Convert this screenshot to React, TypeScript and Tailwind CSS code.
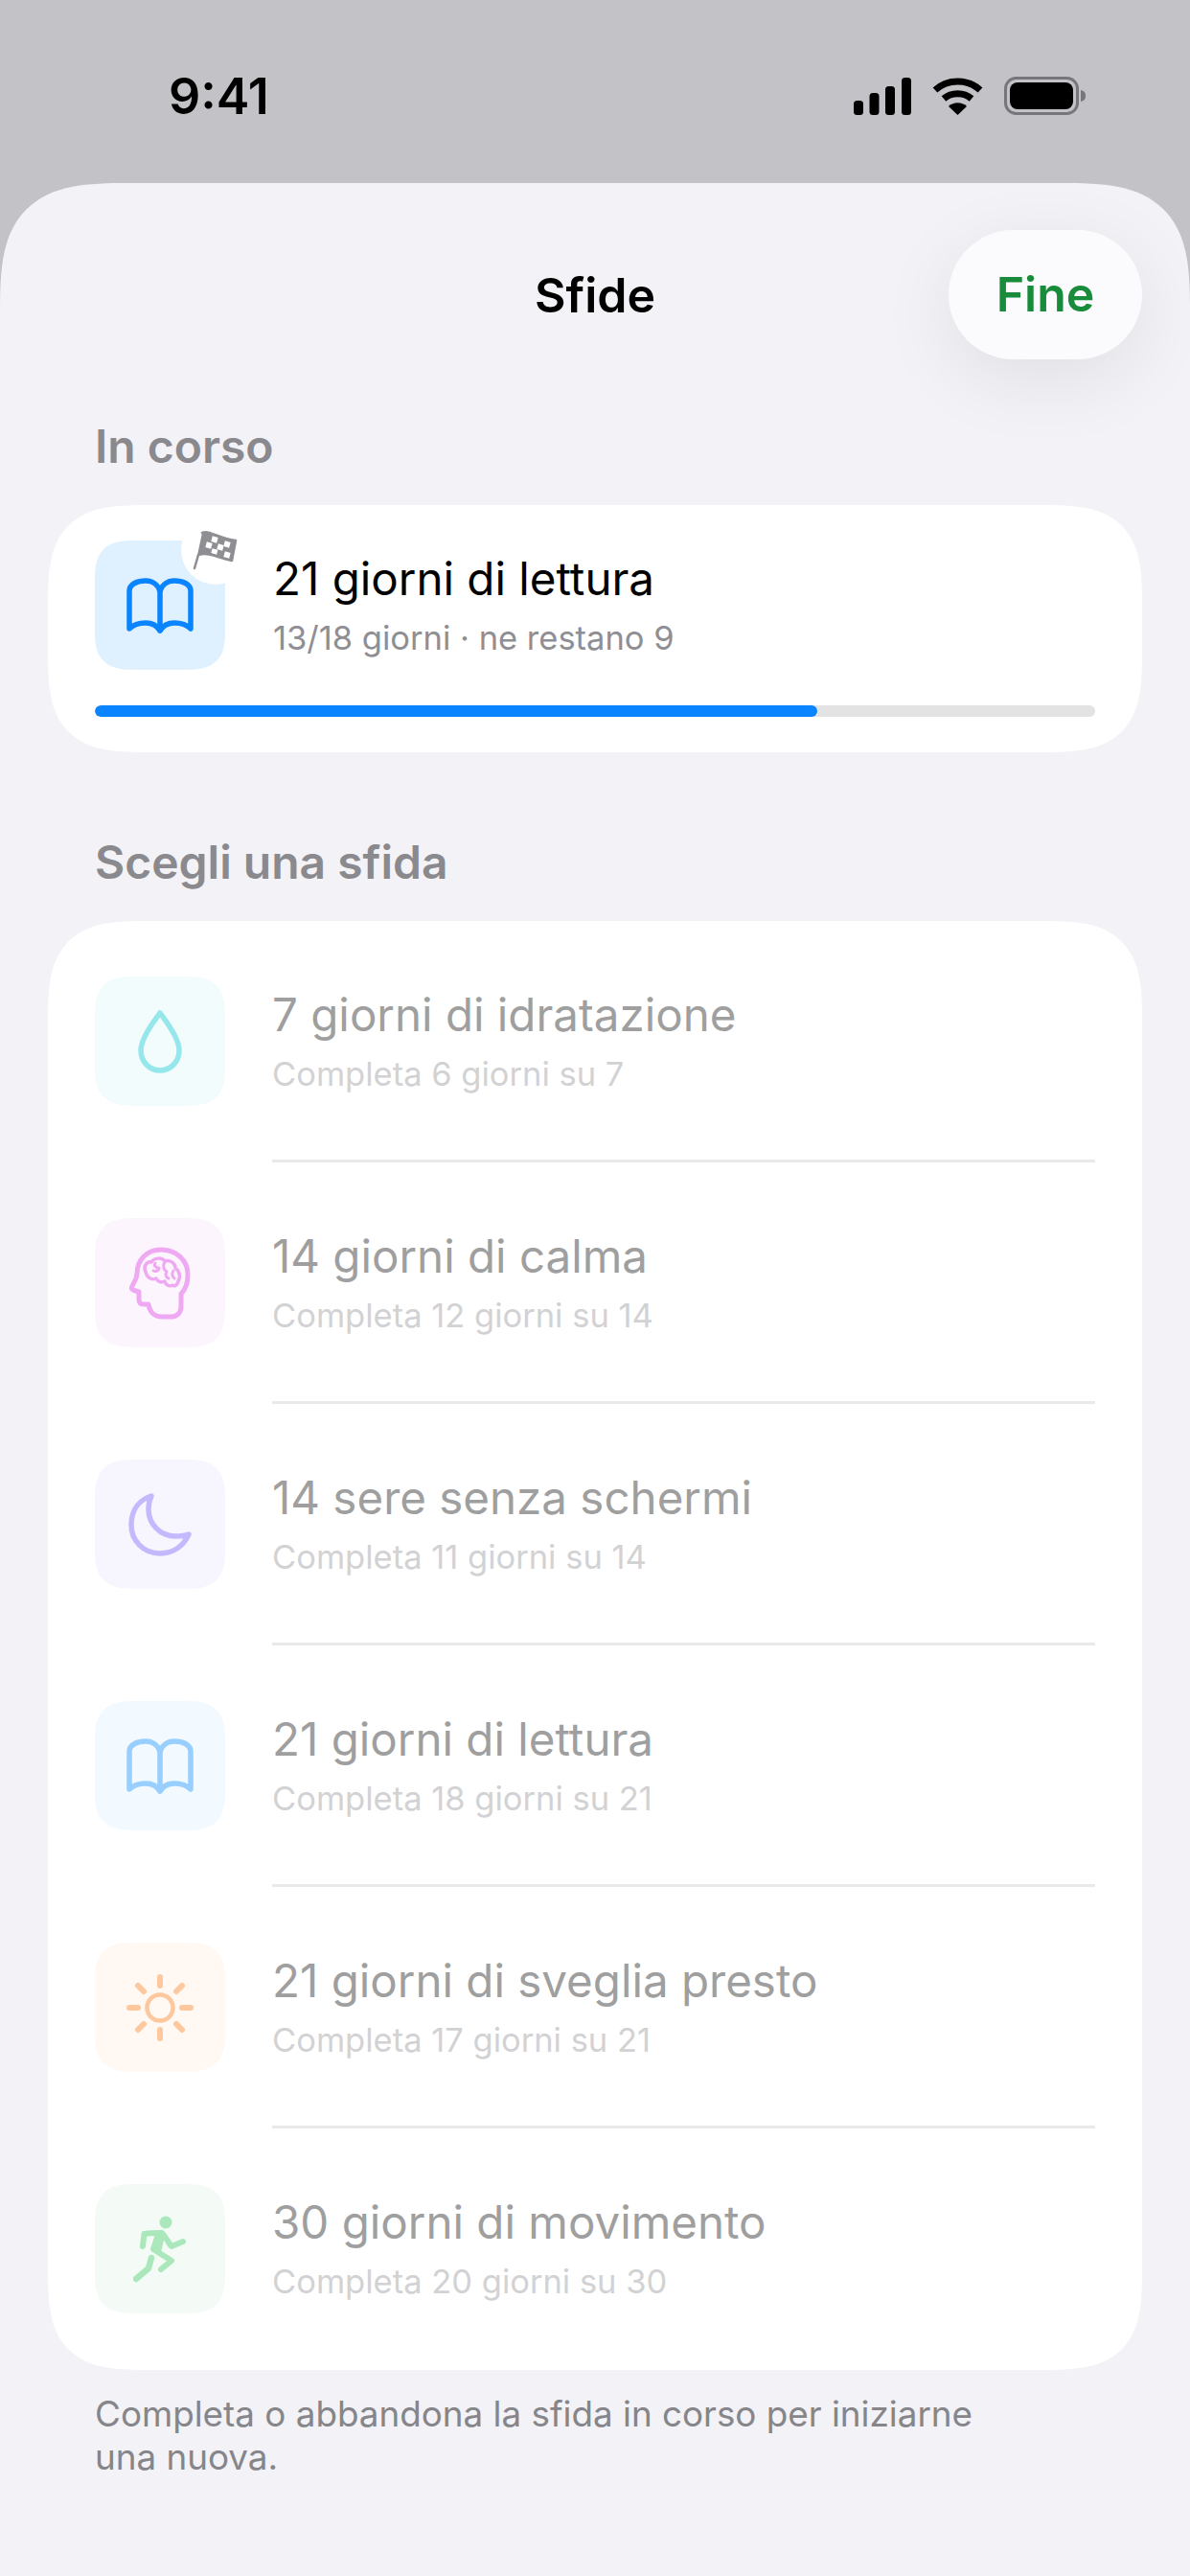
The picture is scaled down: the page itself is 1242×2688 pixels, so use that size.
const font = { fontFamily: '"Inter", "Liberation Sans", sans-serif' };

function Book({ color }: { color: string }) {
  return (
    <svg width="70" height="58" viewBox="0 0 70 58" fill="none" stroke={color} strokeWidth="5.5" strokeLinejoin="round" strokeLinecap="round">
      <path d="M35 14C33 7 27 3 20 3C12 3 3 6 3 14V53C8 48 14 47 20 47C27 47 32 50 35 55C38 50 43 47 50 47C56 47 62 48 67 53V14C67 6 58 3 50 3C43 3 37 7 35 14Z" />
      <path d="M35 14V55" />
    </svg>
  );
}
function Drop() {
  return (
    <svg width="46" height="66" viewBox="0 0 46 66" fill="none" stroke="#96e7ec" strokeWidth="5.5" strokeLinejoin="round">
      <path d="M23 3C27 9 43 28 43 42C43 54 34 63 23 63C12 63 3 54 3 42C3 28 19 9 23 3Z" />
    </svg>
  );
}
function Head() {
  return (
    <svg width="64" height="76" viewBox="0 0 64 76" fill="none" stroke="#efa9f2" strokeWidth="5" strokeLinecap="round" strokeLinejoin="round">
      <path d="M33 3C18 3 8 14 8 28L7 33L2.5 42C2 44 3 45 5 45.5L10 47V55C10 59 12 60 15 60H20C21 68 26 73 34 73H43C50 73 54 69 54 62V49C59 44 61 37 61 29C61 14 49 3 33 3Z" />
      <path d="M17 26C14 21 18 15 23 16C26 11 34 11 37 15C42 13 48 17 48 22C52 25 54 31 51 36C50 40 47 42 45 40C42 42 38 40 37 36C33 38 29 36 28 33C23 35 18 32 17 26Z" strokeWidth="3.5" />
      <path d="M27 17C25 20 28 22 31 22C31 25 27 26 25 25M37 16C34 20 36 24 39 26C37 29 38 32 41 33M46 25C44 28 45 31 47 33" strokeWidth="3" />
    </svg>
  );
}
function Moon() {
  return (
    <svg width="66" height="66" viewBox="0 0 66 66" fill="none" stroke="#c3b9fc" strokeWidth="5.5" strokeLinejoin="round">
      <path d="M24 3C15 6 3 14 3 33C3 50 16 63 33 63C48 63 58 54 63 43C58 45 54 45 49 45C33 45 21 32 21 17C21 11 22 7 24 3Z" />
    </svg>
  );
}
function Sun() {
  return (
    <svg width="70" height="70" viewBox="0 0 70 70" fill="none" stroke="#fdc89e" strokeWidth="6" strokeLinecap="round">
      <circle cx="35" cy="35" r="13.5" strokeWidth="4.5" />
      <path d="M35 3V12M35 58V67M3 35H12M58 35H67M12 12L18 18M58 12L52 18M12 58L18 52M58 58L52 52" />
    </svg>
  );
}
function Runner() {
  return (
    <svg width="56" height="70" viewBox="0 0 56 70" fill="none" stroke="#aae8bb" strokeLinecap="round" strokeLinejoin="round">
      <circle cx="34" cy="7" r="6.5" fill="#aae8bb" stroke="none" />
      <path d="M10 32L11.500 19C18 18 25 18 30 18C34 22 37 29 40 32L52 27" strokeWidth="6" />
      <path d="M26 20L21 35L40 47L29 56" strokeWidth="6" />
      <path d="M28 20L25 34" strokeWidth="10" />
      <path d="M19 44L16 55L3 66" strokeWidth="6.5" />
    </svg>
  );
}
function Flag() {
  return (
    <svg width="48" height="42" viewBox="0 0 48 42" className="block">
      <path d="M10 3C18 0 25 8 45 11L41 32C30 31 18 22 6 26L2 40" fill="#8e8e93" stroke="#8e8e93" strokeWidth="2.5" strokeLinecap="round" strokeLinejoin="round" />
      <g fill="#fff">
        <rect x="20" y="7" width="6" height="6" transform="rotate(15 23 10)" />
        <rect x="33" y="12" width="6" height="6" transform="rotate(15 36 15)" />
        <rect x="14" y="13" width="6" height="6" transform="rotate(15 17 16)" />
        <rect x="26" y="15" width="6" height="6" transform="rotate(15 29 18)" />
        <rect x="20" y="20" width="6" height="5" transform="rotate(15 23 22)" />
        <rect x="33" y="23" width="6" height="6" transform="rotate(15 36 26)" />
      </g>
    </svg>
  );
}

const rows = [
  { t: "7 giorni di idratazione", s: "Completa 6 giorni su 7", bg: "bg-[#f2fcfd]", icon: <Drop /> },
  { t: "14 giorni di calma", s: "Completa 12 giorni su 14", bg: "bg-[#fdf5fe]", icon: <Head /> },
  { t: "14 sere senza schermi", s: "Completa 11 giorni su 14", bg: "bg-[#f7f6ff]", icon: <Moon /> },
  { t: "21 giorni di lettura", s: "Completa 18 giorni su 21", bg: "bg-[#f2f9ff]", icon: <Book color="#99cfff" /> },
  { t: "21 giorni di sveglia presto", s: "Completa 17 giorni su 21", bg: "bg-[#fff8f3]", icon: <Sun /> },
  { t: "30 giorni di movimento", s: "Completa 20 giorni su 30", bg: "bg-[#f4fbf6]", icon: <Runner /> },
];

export default function App() {
  return (
    <div style={font} className="w-[1242px] h-[2688px] bg-[#c3c2c7] flex flex-col overflow-hidden">
      <div className="h-[191px] shrink-0 flex items-start justify-between pl-[176px] pr-[109px] pt-[72px]">
        <span className="text-[52px] leading-[58px] font-semibold text-black">9:41</span>
        <div className="flex items-center gap-[22px] pt-[8px]">
          <svg width="60" height="39" viewBox="0 0 60 39" fill="#000">
            <rect x="0" y="24" width="10" height="15" rx="3.5" />
            <rect x="16.500" y="16" width="10" height="23" rx="3.5" />
            <rect x="33" y="9" width="10" height="30" rx="3.5" />
            <rect x="50" y="0" width="10" height="39" rx="3.5" />
          </svg>
          <svg width="53" height="39" viewBox="0 0 53 39" fill="none" stroke="#000">
            <path d="M3 13C16 1 37 1 50 13" strokeWidth="7" />
            <path d="M12 22C20 15 33 15 41 22" strokeWidth="7" />
            <path d="M26.500 39L17 30C22 25 31 25 36 30Z" fill="#000" stroke="none" />
          </svg>
          <svg width="85" height="40" viewBox="0 0 85 40" fill="none">
            <rect x="1.500" y="1.500" width="75" height="37" rx="11" stroke="#77777b" strokeWidth="3" />
            <rect x="6" y="6" width="66" height="28" rx="8" fill="#000" />
            <path d="M80 14C84 15 85 17 85 20C85 23 84 25 80 26Z" fill="#77777b" />
          </svg>
        </div>
      </div>
      <div className="flex-1 bg-[#f2f2f7] rounded-t-[135px] [corner-shape:superellipse(1.6)] flex flex-col">
        <div className="relative h-[234px] shrink-0 flex items-center justify-center">
          <span className="text-[50px] font-semibold text-black">Sfide</span>
          <div className="absolute right-[50px] top-[49px] w-[202px] h-[135px] rounded-[68px] bg-[#fbfbfe] shadow-[0_20px_80px_rgba(0,0,0,0.08)] flex items-center justify-center">
            <span className="text-[50px] font-semibold text-[#198c3c]">Fine</span>
          </div>
        </div>
        <div className="px-[50px] flex flex-col">
          <div className="pl-[49px] pt-[14px] text-[48px] leading-[54px] font-semibold text-[#8a8a8e]">In corso</div>
          <div className="mt-[34px] h-[258px] rounded-[105px] [corner-shape:superellipse(1.6)] bg-white px-[49px] pt-[37px]">
            <div className="flex items-center gap-[50px]">
              <div className="relative w-[136px] h-[135px] rounded-[42px] [corner-shape:superellipse(1.5)] bg-[#dff0ff] flex items-center justify-center">
                <Book color="#0a84ff" />
                <div className="absolute right-[-26px] top-[-26px] w-[72px] h-[72px] rounded-full bg-white flex items-center justify-center">
                  <Flag />
                </div>
              </div>
              <div className="flex flex-col">
                <span className="text-[47.5px] leading-[58px] text-black">21 giorni di lettura</span>
                <span className="text-[34.5px] leading-[44px] mt-[11px] text-[#8e8e93]">13/18 giorni · ne restano 9</span>
              </div>
            </div>
            <div className="mt-[37px] h-[12px] rounded-full bg-[#e3e3e3] overflow-hidden">
              <div className="h-full w-[72.2%] rounded-full bg-[#0a84ff]" />
            </div>
          </div>
          <div className="pl-[49px] mt-[88px] text-[48px] leading-[54px] font-semibold text-[#8a8a8e]">Scegli una sfida</div>
          <div className="mt-[34px] rounded-[105px] [corner-shape:superellipse(1.6)] bg-white px-[49px] pt-[58px] pb-[59px] flex flex-col">
            {rows.map((r, i) => (
              <div key={i} className="flex flex-col">
                <div className="flex items-center gap-[49px] h-[135px]">
                  <div className={`w-[136px] h-[135px] rounded-[42px] [corner-shape:superellipse(1.5)] flex items-center justify-center ${r.bg}`}>{r.icon}</div>
                  <div className="flex flex-col">
                    <span className="text-[47.5px] leading-[58px] text-[#9f9f9f]">{r.t}</span>
                    <span className="text-[34.5px] leading-[44px] mt-[11px] text-[#d2d2d4]">{r.s}</span>
                  </div>
                </div>
                {i < rows.length - 1 && (
                  <div className="ml-[185px] mt-[56px] mb-[58px] h-[3px] bg-[#e9e9ec]" />
                )}
              </div>
            ))}
          </div>
          <div className="pl-[49px] pr-[160px] mt-[23px] text-[36.8px] leading-[45px] text-[#85858a]">
            Completa o abbandona la sfida in corso per iniziarne una nuova.
          </div>
        </div>
      </div>
    </div>
  );
}
